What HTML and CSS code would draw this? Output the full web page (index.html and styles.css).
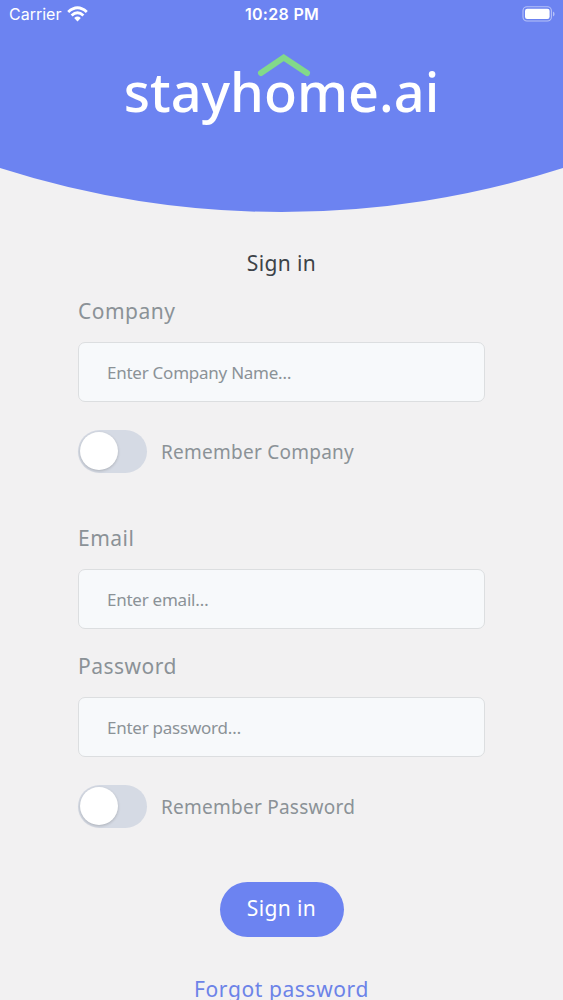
FILE: index.html
```html
<!doctype html>
<html lang="en">
<head>
    <meta charset="utf-8">
    <title>stayhome.ai</title>
    <link rel="stylesheet" href="styles.css">
</head>
<body>
    <header class="header">
        <svg class="header-bg" viewBox="0 0 563 213" width="563" height="213">
            <path d="M0 0H563V168A922 922 0 0 1 0 168Z" fill="#6c83f1"/>
        </svg>
        <div class="status-bar">
            <div class="carrier">
                <span>Carrier</span>
                <svg width="21" height="16" viewBox="0 0 21 16">
                    <g fill="none" stroke="#fff" stroke-width="2.9">
                        <path d="M1.2 6Q10.5 -2.4 19.8 6"/>
                        <path d="M4.6 9.5Q10.5 4 16.4 9.5"/>
                    </g>
                    <path d="M7.2 12Q10.5 9.2 13.8 12L10.5 15.4Z" fill="#fff"/>
                </svg>
            </div>
            <div class="time">10:28 PM</div>
            <div class="battery">
                <svg width="33" height="16" viewBox="0 0 33 16">
                    <rect x="1" y=".8" width="28.4" height="14.2" rx="4" fill="none" stroke="#fff" stroke-opacity=".5" stroke-width="1.1"/>
                    <rect x="3" y="2.8" width="24.6" height="10.2" rx="2.2" fill="#fff"/>
                    <path d="M31 5.6Q32.6 6.4 32.6 8T31 10.4Z" fill="#fff" fill-opacity=".5"/>
                </svg>
            </div>
        </div>
        <div class="logo">
            <svg class="roof" width="54" height="24" viewBox="0 0 54 24">
                <path d="M4 20L26.7 4.6L50 20" fill="none" stroke="#82d98a" stroke-width="6" stroke-linecap="round"/>
            </svg>
            <span>stayhome.ai</span>
        </div>
    </header>

    <main>
        <form class="login">
            <h1>Sign in</h1>

            <label class="label" for="company">Company</label>
            <input class="field" id="company" type="text" placeholder="Enter Company Name…">
            <div class="remember">
                <span class="switch"></span>
                <span>Remember Company</span>
            </div>

            <label class="label label-email" for="email">Email</label>
            <input class="field" id="email" type="text" placeholder="Enter email…">

            <label class="label label-password" for="password">Password</label>
            <input class="field" id="password" type="password" placeholder="Enter password…">
            <div class="remember">
                <span class="switch"></span>
                <span>Remember Password</span>
            </div>

            <button class="btn" type="button">Sign in</button>
            <a class="forgot" href="#">Forgot password</a>
        </form>
    </main>
</body>
</html>
```
FILE: styles.css
```css
*{
    box-sizing: border-box;
}
body{
    margin: 0;
    height: 1000px;
    overflow: hidden;
    background-color: #f2f1f2;
    color: #8b9297;
    font-family: "Noto Sans", sans-serif;
    font-size: 21px;
    line-height: 28px;
}

/* header */
.header{
    position: relative;
    height: 212px;
    color: #fff;
}
.header-bg{
    position: absolute;
    top: 0;
    left: 0;
}
.status-bar{
    position: relative;
    display: grid;
    grid-template-columns: 1fr auto 1fr;
    align-items: center;
    height: 28px;
    padding: 0 8px 0 9px;
    font-family: Inter, sans-serif;
    font-size: 16px;
}
.status-bar svg{
    display: block;
}
.carrier{
    display: flex;
    align-items: center;
    gap: 6px;
}
.time{
    font-weight: 600;
    letter-spacing: 0.3px;
}
.battery{
    justify-self: end;
}
.logo{
    position: relative;
    height: 76px;
    margin-top: 15px;
    text-align: center;
    font-size: 54px;
    font-weight: 500;
    line-height: 97px;
}
.roof{
    position: absolute;
    top: 10px;
    left: 257px;
}

/* sign in form */
.login{
    display: flex;
    flex-direction: column;
    width: 407px;
    margin: 37px auto 0;
    letter-spacing: 0.5px;
}
h1{
    margin: 0 0 20px;
    color: #3d4348;
    font-size: 21px;
    font-weight: 400;
    letter-spacing: 0.4px;
    text-align: center;
}
.label{
    margin-bottom: 17px;
}
.label-email{
    margin-top: 51px;
}
.label-password{
    margin-top: 23px;
}
.field{
    height: 60px;
    padding: 0 28px;
    border: 1px solid #dcdee0;
    border-radius: 7px;
    background-color: #f7f9fb;
    font-family: inherit;
    font-size: 17px;
    letter-spacing: -0.25px;
}
.field::placeholder{
    color: #8b9297;
}
.remember{
    display: flex;
    align-items: center;
    gap: 14px;
    height: 43px;
    margin-top: 28px;
    font-size: 19px;
    letter-spacing: 0.25px;
}
.switch{
    width: 69px;
    height: 43px;
    padding: 2px;
    border-radius: 22px;
    background-color: #d5dae4;
}
.switch::before{
    content: "";
    display: block;
    width: 38px;
    height: 38px;
    border-radius: 50%;
    background-color: #fff;
    box-shadow: 0 1px 3px rgba(0, 0, 0, 0.2);
}
.btn{
    align-self: center;
    width: 124px;
    height: 55px;
    margin-top: 54px;
    padding: 0 0 4px;
    border: none;
    border-radius: 28px;
    background-color: #6c83f1;
    color: #fff;
    font-family: inherit;
    font-size: 21px;
    letter-spacing: 0.4px;
}
.forgot{
    align-self: center;
    margin-top: 38px;
    color: #6c83e8;
    letter-spacing: 0.6px;
    text-decoration: none;
}
```
